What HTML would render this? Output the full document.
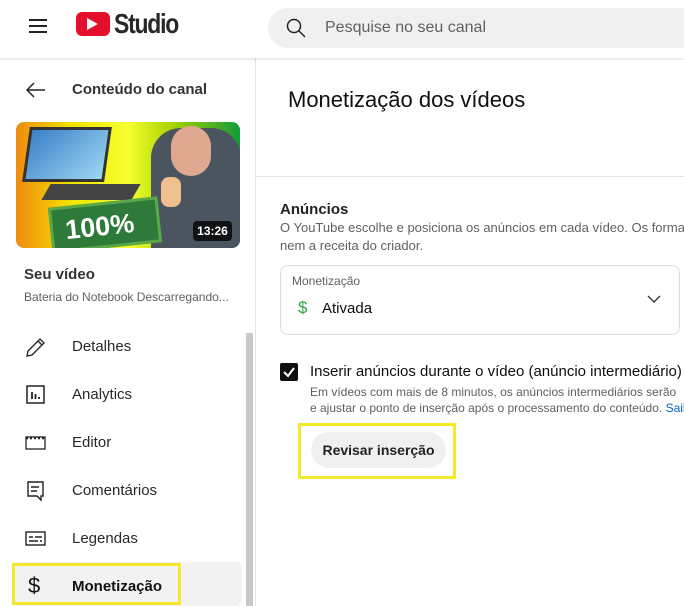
<!DOCTYPE html>
<html><head><meta charset="utf-8"><style>
*{margin:0;padding:0;box-sizing:border-box}
body{width:684px;height:606px;overflow:hidden;background:#fff;font-family:"Liberation Sans",Arial,sans-serif;color:#0f0f0f;position:relative}
.a{position:absolute;white-space:nowrap}
.hdr{position:absolute;left:0;top:0;width:684px;height:58px;background:#fff;box-shadow:0 1px 3px rgba(0,0,0,.15);z-index:2}
.nav{font-size:15px;color:#282828;left:72px}
.ic{position:absolute;left:25px}
</style></head><body>
<div class="hdr">
  <div class="a" style="left:29px;top:19px;width:18px;height:2px;background:#222"></div>
  <div class="a" style="left:29px;top:25px;width:18px;height:2px;background:#222"></div>
  <div class="a" style="left:29px;top:31px;width:18px;height:2px;background:#222"></div>
  <div class="a" style="left:76px;top:12px;width:34px;height:24px;background:#e4102b;border-radius:6px"></div>
  <svg class="a" style="left:87px;top:18px" width="12" height="12"><path d="M0 0L11 6L0 12Z" fill="#fff"/></svg>
  <div class="a" style="left:114px;top:8px;font-size:28px;font-weight:bold;letter-spacing:-1.5px;color:#282828;transform:scaleX(.82);transform-origin:left">Studio</div>
  <div class="a" style="left:268px;top:8px;width:440px;height:40px;background:#f0f0f0;border-radius:20px"></div>
  <svg class="a" style="left:286px;top:18px" width="20" height="20"><circle cx="8" cy="8" r="6.5" stroke="#222" stroke-width="1.5" fill="none"/><path d="M13 13L19 19" stroke="#222" stroke-width="1.5"/></svg>
  <div class="a" style="left:325px;top:19px;font-size:16px;color:#606060">Pesquise no seu canal</div>
</div>
<div class="a" style="left:255px;top:58px;width:1px;height:548px;background:#e5e5e5"></div>
<div class="a" style="left:246px;top:333px;width:7px;height:273px;background:#c8c8c8"></div>
<svg class="a" style="left:26px;top:82px" width="20" height="16"><path d="M19 8H2M8 1L1 8L8 15" stroke="#222" stroke-width="1.5" fill="none"/></svg>
<div class="a" style="left:72px;top:81px;font-size:15px;font-weight:bold;color:#333">Conteúdo do canal</div>
<div class="a" style="left:16px;top:122px;width:224px;height:126px;border-radius:8px;overflow:hidden;background:linear-gradient(90deg,#f08a10 0%,#f2e400 25%,#f6ff30 50%,#a8d200 70%,#119b3a 100%)">
  <div class="a" style="left:10px;top:5px;width:82px;height:55px;background:linear-gradient(135deg,#3a80c8,#9ed6f2);border:3px solid #333;transform:skewX(-8deg)"></div>
  <div class="a" style="left:30px;top:62px;width:90px;height:16px;background:#444;transform:skewX(-30deg)"></div>
  <div class="a" style="left:135px;top:6px;width:90px;height:120px;background:#4a5560;border-radius:30px 30px 0 0"></div>
  <div class="a" style="left:155px;top:4px;width:40px;height:50px;background:#e0a890;border-radius:20px"></div>
  <div class="a" style="left:145px;top:55px;width:20px;height:30px;background:#f0c090;border-radius:8px"></div>
  <div class="a" style="left:34px;top:80px;width:110px;height:46px;background:#2e7a3a;border:3px solid #5aa848;transform:rotate(-6deg);color:#fff;font-size:27px;font-weight:bold;padding:6px 0 0 12px">100%</div>
  <div class="a" style="left:177px;top:99px;width:39px;height:20px;background:rgba(0,0,0,.8);border-radius:4px;color:#fff;font-size:12px;font-weight:bold;text-align:center;line-height:20px">13:26</div>
</div>
<div class="a" style="left:24px;top:266px;font-size:15px;font-weight:bold;color:#333">Seu vídeo</div>
<div class="a" style="left:24px;top:290px;font-size:12px;color:#606060">Bateria do Notebook Descarregando...</div>
<svg class="ic" style="top:336px" width="22" height="22"><path d="M2 20L3 15L15 3L19 7L7 19Z M13 5L17 9" stroke="#222" stroke-width="1.3" fill="none"/></svg>
<div class="a nav" style="top:338px">Detalhes</div>
<svg class="ic" style="top:384px" width="22" height="22"><rect x="2" y="2" width="17" height="17" stroke="#222" stroke-width="1.5" fill="none"/><path d="M7 8V15M10.5 10V15M14 13V15" stroke="#222" stroke-width="1.8"/></svg>
<div class="a nav" style="top:386px">Analytics</div>
<svg class="ic" style="top:432px" width="22" height="22"><rect x="1" y="5" width="19" height="12" stroke="#222" stroke-width="1.3" fill="none"/><path d="M1 6H20" stroke="#222" stroke-width="2.5" stroke-dasharray="2 2"/></svg>
<div class="a nav" style="top:434px">Editor</div>
<svg class="ic" style="top:480px" width="22" height="22"><path d="M3 2H18V16H16V20L12 16H3Z" stroke="#222" stroke-width="1.4" fill="none"/><path d="M6 7H14M6 11H12" stroke="#222" stroke-width="1.4"/></svg>
<div class="a nav" style="top:482px">Comentários</div>
<svg class="ic" style="top:528px" width="22" height="22"><rect x="1" y="4" width="19" height="13" stroke="#222" stroke-width="1.4" fill="none"/><path d="M4 9H8M10 9H17M4 13H13M15 13H17" stroke="#222" stroke-width="1.6"/></svg>
<div class="a nav" style="top:530px">Legendas</div>
<div class="a" style="left:12px;top:562px;width:230px;height:44px;background:#f2f2f2;border-radius:6px"></div>
<div class="a" style="left:12px;top:563px;width:169px;height:42px;border:3px solid #f2ea28"></div>
<div class="a" style="left:28px;top:573px;font-size:22px;color:#111">$</div>
<div class="a nav" style="top:578px;font-weight:bold;color:#111">Monetização</div>

<div class="a" style="left:288px;top:87px;font-size:22px;color:#0f0f0f">Monetização dos vídeos</div>
<div class="a" style="left:256px;top:176px;width:428px;height:1px;background:#e5e5e5"></div>
<div class="a" style="left:280px;top:201px;font-size:15px;font-weight:bold;color:#222">Anúncios</div>
<div class="a" style="left:280px;top:219px;font-size:13px;color:#606060;line-height:18px">O YouTube escolhe e posiciona os anúncios em cada vídeo. Os formatos<br>nem a receita do criador.</div>
<div class="a" style="left:280px;top:265px;width:400px;height:70px;border:1px solid #ddd;border-radius:8px"></div>
<div class="a" style="left:292px;top:274px;font-size:12px;color:#606060">Monetização</div>
<div class="a" style="left:298px;top:298px;font-size:17px;color:#2ba640">$</div>
<div class="a" style="left:322px;top:300px;font-size:15px">Ativada</div>
<svg class="a" style="left:647px;top:294px" width="14" height="10"><path d="M1 2L7 8L13 2" stroke="#333" stroke-width="1.4" fill="none"/></svg>
<div class="a" style="left:280px;top:363px;width:18px;height:18px;background:#0f0f0f;border-radius:2px"></div>
<svg class="a" style="left:282px;top:365px" width="14" height="14"><path d="M2 7L6 11L12 3" stroke="#fff" stroke-width="2" fill="none"/></svg>
<div class="a" style="left:310px;top:363px;font-size:15px">Inserir anúncios durante o vídeo (anúncio intermediário)</div>
<div class="a" style="left:310px;top:384px;font-size:12px;color:#606060;line-height:16px">Em vídeos com mais de 8 minutos, os anúncios intermediários serão<br>e ajustar o ponto de inserção após o processamento do conteúdo. <span style="color:#065fd4">Saiba</span></div>
<div class="a" style="left:311px;top:432px;width:135px;height:36px;background:#f0f0f0;border-radius:18px;font-size:14px;font-weight:bold;text-align:center;line-height:36px;color:#222">Revisar inserção</div>
<div class="a" style="left:298px;top:423px;width:158px;height:56px;border:3px solid #f2ea28"></div>
</body></html>
